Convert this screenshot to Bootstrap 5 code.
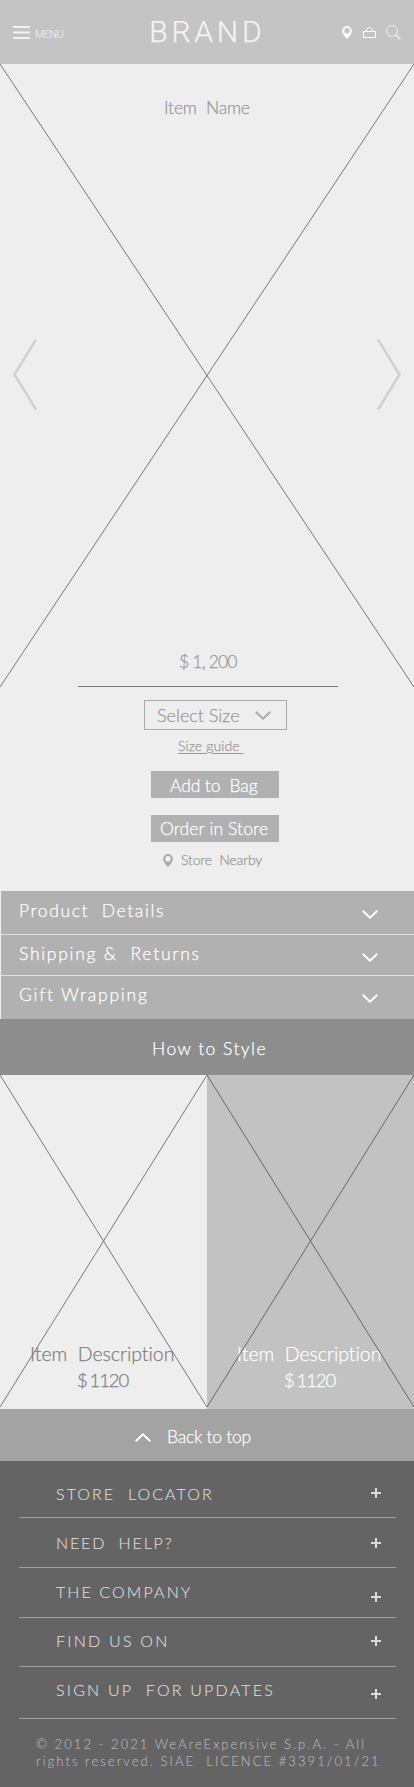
<!DOCTYPE html>
<html lang="en">
<head>
<meta charset="utf-8">
<meta name="viewport" content="width=device-width, initial-scale=1">
<title>Brand – Item</title>
<link href="https://cdn.jsdelivr.net/npm/bootstrap@5.3.0/dist/css/bootstrap.min.css" rel="stylesheet">
<style>
body{width:414px;background:#eee;color:#999;font-family:Lato,"Liberation Sans",sans-serif;font-weight:300;font-size:17.5px;line-height:24px;overflow-x:hidden}
svg{display:block;flex:none}
.txt{white-space:pre;display:block;-webkit-text-stroke:.25px currentColor}
.topbar{height:64px;background:#c4c4c4;color:#f4f4f4;font-family:Roboto,sans-serif;padding:0 13px}
.t-menu{font-size:10.7px;margin:6px 0 0 5px;line-height:14px;letter-spacing:-.4px;-webkit-text-stroke:0}
.t-brand{font-size:30px;line-height:36px;letter-spacing:3.75px;margin-left:86px}
.topicons{margin-left:auto}
.pin{margin-right:11px}
.bag{margin-right:10px}
.hero{height:623px}
.cross{position:absolute;left:0;top:0}
.t-name{padding-top:32px;margin-left:164px;letter-spacing:-.18px}
.arrows{margin-top:219px;padding:0 13px}
.t-price{margin:239px 0 0 179px;letter-spacing:-.8px}
.rule{width:260px;height:1px;background:#777;margin:12px 0 0 78px}
.buy{height:204px}
.size-box{width:143px;height:30px;border:1px solid #aaa;margin:13px 0 0 144px;padding:0 15px 0 12px;font-size:18px}
.t-guide,.t-guide:hover{font-size:14px;line-height:20px;margin:6px 0 0 178px;letter-spacing:.1px;color:#999;text-decoration:underline;text-underline-offset:2px}
.cta,.cta:hover{width:128px;height:27px;background:#b1b1b1;color:#fff;border:0;border-radius:0;margin-left:151px;padding:0;line-height:28px;text-align:left;font-size:17.5px;font-weight:300}
.cta.cta-bag{margin-top:15px;padding:1px 0 0 19px;letter-spacing:-.12px}
.cta.cta-store{margin-top:17px;padding-left:9px;letter-spacing:.12px;line-height:26px}
.nearby{font-size:14px;line-height:20px;margin:8px 0 0 163px;gap:8px;letter-spacing:-.15px}
.acc{margin-left:1px}
.acc-row{height:44px;background:#b1b1b1;color:#fff;padding:0 36px 0 18px;border-bottom:1px solid #e2e2e2}
.acc-row svg{margin-top:19px}
.acc-row .txt{padding-top:8px;letter-spacing:1.6px}
.acc-row.r2{height:41px}.acc-row.r2 .txt{padding-top:7px;letter-spacing:1.72px}.acc-row.r2 svg{margin-top:18px}
.acc-row.r3{height:43px;border:0}.acc-row.r3 .txt{padding-top:7px;letter-spacing:1.8px}.acc-row.r3 svg{margin-top:18px}
.how{height:56px;background:#8d8d8d;color:#fff;padding:18px 0 0 152px;letter-spacing:1.45px;font-size:17.5px;line-height:24px;font-weight:300}
.tile{width:207px;height:334px;font-size:19.5px;line-height:26px;color:#808080}
.tile-dark{background:#c2c2c2;color:#fff}
.t-desc{padding-top:266px;margin-left:30px;letter-spacing:-.02px}
.t-cost{margin-left:77px;letter-spacing:-1.1px;word-spacing:-1px;font-size:18.5px}
.backtop{height:52px;background:#a3a3a3;color:#fff;padding:4px 0 0 135px;letter-spacing:-.25px;gap:16px}
.foot{height:326px;background:#646464;color:#dcdcdc;padding:0 18px 0 19px;font-size:16px}
.foot-row{height:50px;border-bottom:1px solid #a0a0a0;padding:0 15px 0 37px}
.foot-row .txt{-webkit-text-stroke-width:.15px}
.f1{height:57px;padding-top:21px;letter-spacing:2.07px}
.f2{padding-top:13px;letter-spacing:1.85px}
.f3{padding-top:12px;letter-spacing:2.1px}
.f4{height:49px;padding-top:11px;letter-spacing:2.25px}
.f5{height:52px;padding-top:11px;letter-spacing:2.2px}
.f1 svg{margin-top:6px}.f2 svg,.f4 svg{margin-top:7px}.f3 svg{margin-top:12px}.f5 svg{margin-top:11px}
.legal{font-size:13px;line-height:17px;color:#b8b8b8;padding:17px 0 0 17px;letter-spacing:2.06px;-webkit-text-stroke-width:.1px}
</style>
</head>
<body>
<header class="topbar d-flex align-items-center">
<svg width="17" height="13" viewBox="0 0 17 13" stroke="#f2f2f2" stroke-width="2"><path d="M0 1h17M0 6.500h17M0 12h17"/></svg>
<span class="txt t-menu">MENU</span>
<span class="txt t-brand">BRAND</span>
<div class="topicons d-flex align-items-center">
<svg class="pin" width="10" height="13" viewBox="0 0 10 13" fill="#fafafa" fill-rule="evenodd"><path d="M5 0a4.900 4.900 0 0 1 4.900 4.900C9.900 8 7 10.500 5 13 3 10.500.1 8 .1 4.900A4.900 4.900 0 0 1 5 0zm0 2.100a2.700 2.700 0 1 0 0 5.400 2.700 2.700 0 0 0 0-5.400z"/></svg>
<svg class="bag" width="13" height="11" viewBox="0 0 13 11" fill="none" stroke="#fff"><path d="M.5 4.500h12v6H.5zM3.200 4.500C3.300 2 4.600.6 6.500.6S9.700 2 9.800 4.500"/></svg>
<svg width="15" height="15" viewBox="0 0 15 15" fill="none" stroke="#f0f0f0"><circle cx="6" cy="6" r="5.400"/><path d="M9.500 9.500l5 5" stroke-width="1.300"/></svg>
</div>
</header>

<section class="hero position-relative">
<svg class="cross" width="414" height="623" stroke="#777" stroke-width="1"><path d="M0 0L414 623M414 0L0 623"/></svg>
<div class="txt t-name">Item  Name</div>
<div class="arrows d-flex justify-content-between">
<svg width="24" height="72" viewBox="0 0 24 72" fill="none" stroke="#d0d0d0" stroke-width="2.500"><path d="M23 .5L1.500 35.500 23 70.500"/></svg>
<svg width="24" height="72" viewBox="0 0 24 72" fill="none" stroke="#d0d0d0" stroke-width="2.500"><path d="M1 .5L22.500 35.500 1 70.500"/></svg>
</div>
<div class="txt t-price">$ 1, 200</div>
<div class="rule"></div>
</section>

<section class="buy d-flex flex-column align-items-start">
<div class="size-box d-flex align-items-center justify-content-between"><span class="txt">Select Size</span>
<svg width="16" height="9" viewBox="0 0 16 9" fill="none" stroke="#aaa" stroke-width="2"><path d="M.7.8L8 7.700 15.300.8"/></svg></div>
<a class="txt t-guide" href="#">Size guide </a>
<button class="cta cta-bag txt">Add to  Bag</button>
<button class="cta cta-store txt">Order in Store</button>
<div class="nearby d-flex align-items-center">
<svg width="10" height="13" viewBox="0 0 10 13" fill="#aaa" fill-rule="evenodd"><path d="M5 0a4.900 4.900 0 0 1 4.900 4.900C9.900 8 7 10.500 5 13 3 10.500.1 8 .1 4.900A4.900 4.900 0 0 1 5 0zm0 1.900a2.900 2.900 0 1 0 0 5.800 2.900 2.900 0 0 0 0-5.800z"/></svg>
<span class="txt">Store  Nearby</span></div>
</section>

<section class="acc">
<div class="acc-row d-flex justify-content-between align-items-start"><span class="txt">Product  Details</span><svg width="16" height="9" viewBox="0 0 16 9" fill="none" stroke="#fff" stroke-width="2"><path d="M.7.8L8 7.700 15.300.8"/></svg></div>
<div class="acc-row r2 d-flex justify-content-between align-items-start"><span class="txt">Shipping &amp;  Returns</span><svg width="16" height="9" viewBox="0 0 16 9" fill="none" stroke="#fff" stroke-width="2"><path d="M.7.8L8 7.700 15.300.8"/></svg></div>
<div class="acc-row r3 d-flex justify-content-between align-items-start"><span class="txt">Gift Wrapping</span><svg width="16" height="9" viewBox="0 0 16 9" fill="none" stroke="#fff" stroke-width="2"><path d="M.7.8L8 7.700 15.300.8"/></svg></div>
</section>

<h2 class="how txt m-0">How to Style</h2>

<section class="d-flex">
<div class="tile position-relative">
<div class="txt t-desc">Item  Description</div>
<div class="txt t-cost">$ 1120</div>
<svg class="cross" width="207" height="332" stroke="#777"><path d="M0 0L207 332M207 0L0 332"/></svg>
</div>
<div class="tile tile-dark position-relative">
<div class="txt t-desc">Item  Description</div>
<div class="txt t-cost">$ 1120</div>
<svg class="cross" width="207" height="332" stroke="#666"><path d="M0 0L207 332M207 0L0 332"/></svg>
</div>
</section>

<a class="backtop d-flex align-items-center text-decoration-none" href="#">
<svg width="16" height="9" viewBox="0 0 16 9" fill="none" stroke="#fff" stroke-width="2"><path d="M.7 8.200L8 1.300 15.300 8.200"/></svg>
<span class="txt">Back to top</span>
</a>

<footer class="foot">
<div class="foot-row f1 d-flex justify-content-between"><span class="txt">STORE  LOCATOR</span><svg width="10" height="10" stroke="#dcdcdc" stroke-width="2"><path d="M0 5h10M5 0v10"/></svg></div>
<div class="foot-row f2 d-flex justify-content-between"><span class="txt">NEED  HELP?</span><svg width="10" height="10" stroke="#dcdcdc" stroke-width="2"><path d="M0 5h10M5 0v10"/></svg></div>
<div class="foot-row f3 d-flex justify-content-between"><span class="txt">THE COMPANY</span><svg width="10" height="10" stroke="#dcdcdc" stroke-width="2"><path d="M0 5h10M5 0v10"/></svg></div>
<div class="foot-row f4 d-flex justify-content-between"><span class="txt">FIND US ON</span><svg width="10" height="10" stroke="#dcdcdc" stroke-width="2"><path d="M0 5h10M5 0v10"/></svg></div>
<div class="foot-row f5 d-flex justify-content-between"><span class="txt">SIGN UP  FOR UPDATES</span><svg width="10" height="10" stroke="#dcdcdc" stroke-width="2"><path d="M0 5h10M5 0v10"/></svg></div>
<div class="txt legal">© 2012 - 2021 WeAreExpensive S.p.A. - All
rights reserved. SIAE  LICENCE #3391/01/21</div>
</footer>
<script src="https://cdn.jsdelivr.net/npm/bootstrap@5.3.0/dist/js/bootstrap.bundle.min.js"></script>
</body>
</html>
